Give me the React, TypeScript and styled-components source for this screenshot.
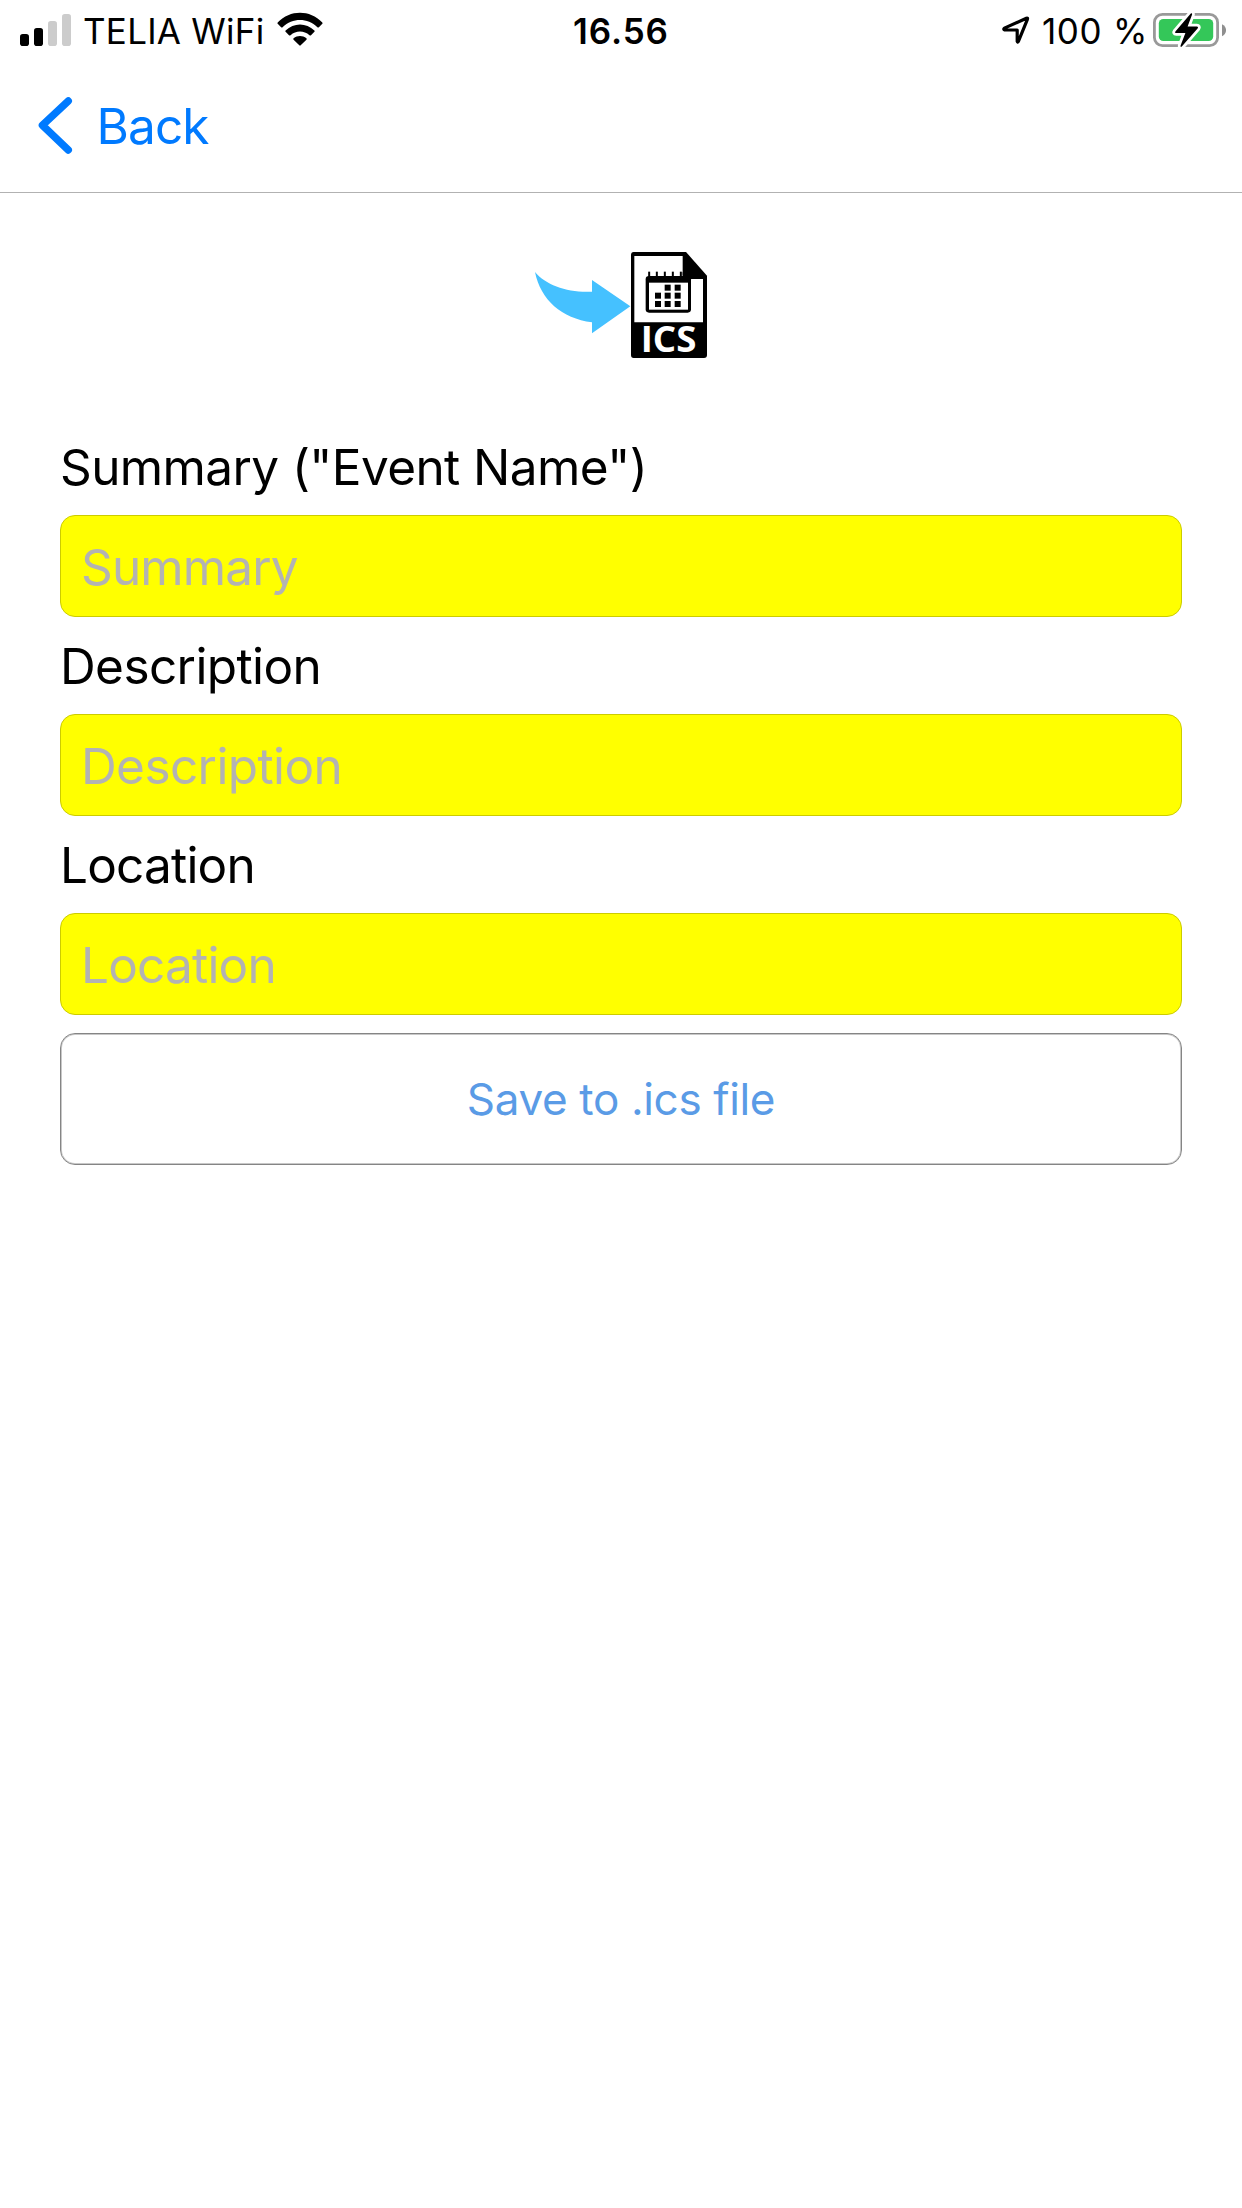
import React from "react";
import styled, { createGlobalStyle } from "styled-components";

const GlobalStyle = createGlobalStyle`
  * { box-sizing: border-box; }
  body { margin: 0; background: #fff; font-family: Inter, "Liberation Sans", sans-serif; color: #000; }
`;

const Screen = styled.div`
  width: 1242px;
  height: 2208px;
  overflow: hidden;
  background: #fff;
  display: flex;
  flex-direction: column;
`;

const StatusBar = styled.header`
  height: 60px;
  flex: none;
  padding: 0 16px;
  display: grid;
  grid-template-columns: 1fr auto 1fr;
  align-items: start;
  line-height: 62px;
  font-size: 35px;

  svg { display: block; flex: none; }
`;

const StatusGroup = styled.div<{ $end?: boolean }>`
  display: flex;
  justify-content: ${(p) => (p.$end ? "flex-end" : "flex-start")};
  padding-left: ${(p) => (p.$end ? 0 : 4)}px;
`;

const Carrier = styled.span`
  width: 182px;
  margin: 0 12px 0 12px;
  white-space: nowrap;
  letter-spacing: 0.25px;
`;

const Clock = styled.span`
  font-weight: 600;
  letter-spacing: 0.9px;
`;

const Charge = styled.span`
  margin: 0 5px 0 12px;
  white-space: nowrap;
  letter-spacing: 0.7px;
`;

const NavBar = styled.nav`
  height: 133px;
  flex: none;
  border-bottom: 1px solid #b2b2b2;
  padding: 36px 0 0 37px;
`;

const BackLink = styled.a`
  display: flex;
  align-items: center;
  gap: 23.5px;
  height: 60px;
  width: max-content;
  color: #007aff;
  font-size: 49.5px;
  line-height: 60px;
  letter-spacing: -0.9px;
`;

const Content = styled.main`
  display: flex;
  flex-direction: column;
  padding: 58px 60px 0;
`;

const Logo = styled.svg`
  display: block;
  align-self: center;
  overflow: visible;
  margin-bottom: 77px;
`;

const Form = styled.form`
  display: flex;
  flex-direction: column;
  gap: 18px;
`;

const Label = styled.label<{ $tracking: number }>`
  height: 61px;
  line-height: 63px;
  font-size: 49.5px;
  letter-spacing: ${(p) => p.$tracking}px;
`;

const Field = styled.input<{ $tracking: number }>`
  height: 102px;
  width: 100%;
  border: 1px solid #cccc00;
  border-radius: 15px;
  background: #ff0;
  padding: 1px 20px 0;
  outline: none;
  font: 400 49.5px Inter, "Liberation Sans", sans-serif;
  letter-spacing: ${(p) => p.$tracking}px;

  &::placeholder { color: #b3b3b3; opacity: 1; }
`;

const SaveButton = styled.button`
  height: 132px;
  border: 1px solid #858585;
  box-shadow: inset 0 0 0 1px #c8c8c8;
  border-radius: 15px;
  background: #fff;
  color: #5a9be6;
  padding: 0;
  font: 400 44px Inter, "Liberation Sans", sans-serif;
  letter-spacing: -0.35px;
`;

const fields = [
  { id: "summary", label: 'Summary ("Event Name")', placeholder: "Summary", labelTracking: -0.6, tracking: -0.85 },
  { id: "description", label: "Description", placeholder: "Description", labelTracking: -0.6, tracking: -0.6 },
  { id: "location", label: "Location", placeholder: "Location", labelTracking: -0.8, tracking: -0.8 },
];

const SignalIcon = () => (
  <svg width="51" height="60" viewBox="0 0 51 60">
    <rect x="0" y="34" width="9" height="12" rx="2.8" />
    <rect x="14" y="28" width="9" height="18" rx="2.8" />
    <rect x="28" y="21" width="9" height="25" rx="2.8" fill="#ccc" />
    <rect x="42" y="14" width="9" height="32" rx="2.8" fill="#ccc" />
  </svg>
);

const WifiIcon = () => (
  <svg width="46" height="60" viewBox="0 0 46 60">
    <path d="M.7 22.4C13.2 9.5 32.8 9.5 45.3 22.4q.7.7 0 1.4l-3.4 3.4q-.8.7-1.5 0c-9.8-9.6-25-9.6-34.8 0q-.7.7-1.5 0L.7 23.8q-.7-.7 0-1.4z" />
    <path d="M8.6 30.4c8.2-8 20.6-8 28.8 0q.7.7 0 1.4L34 35.2q-.7.7-1.5 0c-5.5-5-13.5-5-19 0q-.8.7-1.5 0l-3.4-3.4q-.7-.7 0-1.4z" />
    <path d="M16.6 38.3c3.7-3.1 9.1-3.1 12.8 0q.8.7 0 1.5l-5.7 5.5q-.7.7-1.4 0l-5.7-5.5q-.8-.8 0-1.5z" />
  </svg>
);

const LocationIcon = () => (
  <svg width="28" height="60" viewBox="0 0 28 60">
    <path
      d="M2.4 28.1 24.4 18.3q1.6-.6 1 1L16.3 41.6q-.7 1.3-1.1-.2V30H2.8q-1.8-.7-.4-1.9z"
      fill="none"
      stroke="#000"
      strokeWidth="3.2"
      strokeLinejoin="round"
    />
  </svg>
);

const BatteryIcon = () => (
  <svg width="73" height="60" viewBox="0 0 73 60">
    <rect x="1.4" y="14.4" width="63.2" height="31.2" rx="8" fill="none" stroke="#999" strokeWidth="2.8" />
    <path d="M69 24.2c5.4 2.7 5.4 9.3 0 12z" fill="#8f8f8f" />
    <rect x="5.8" y="19" width="54.4" height="22" rx="4.5" fill="#34c759" />
    <path
      d="M37.8 13.5 22.6 31.2q-1.3 1.8.8 1.9h9l-4.8 12.5q-.4 2 1.2 1l15.8-18.2q1.2-1.7-.9-1.8h-9.1l4.5-12.2q.2-1.8-1.3-.9z"
      stroke="#fff"
      strokeWidth="5.5"
      strokeLinejoin="round"
    />
    <path d="M37.8 13.5 22.6 31.2q-1.3 1.8.8 1.9h9l-4.8 12.5q-.4 2 1.2 1l15.8-18.2q1.2-1.7-.9-1.8h-9.1l4.5-12.2q.2-1.8-1.3-.9z" />
  </svg>
);

const BackChevron = () => (
  <svg width="36" height="60" viewBox="0 0 36 60">
    <path d="M31.3 5 5.4 29.3 31.3 54" fill="none" stroke="#007aff" strokeWidth="7.4" strokeLinecap="round" strokeLinejoin="round" />
  </svg>
);

const IcsLogo = () => (
  <Logo width="172" height="108" viewBox="45 48 516 324">
    <path d="M45 111C78 151 145 174 216 170V135L331 214 216 295V262C125 250 62 195 45 111z" fill="#45c1ff" />
    <path d="M341 51H498L561 122V360q0 9-9 9H341q-8 0-8-9V60q0-9 8-9z" />
    <path d="M343 63H488V120q0 12 12 12h49V262H343z" fill="#fff" />
    <g>
      {[387, 410, 434, 458, 482].map((x) => (
        <rect key={x} x={x - 2.5} y="110" width="6" height="16" />
      ))}
      <rect x="377" y="123" width="136" height="110" rx="10" />
      <path d="M488 111V120q0 12 12 12h12V123h-12z" />
    </g>
    <rect x="387" y="143" width="117" height="81" fill="#fff" />
    {[
      [434, 149], [464, 149],
      [405, 173], [434, 173], [464, 173],
      [405, 198], [434, 198], [464, 198],
    ].map(([x, y]) => (
      <rect key={`${x}-${y}`} x={x} y={y} width="18" height="18" />
    ))}
    <text x="362" y="350" fill="#fff" fontFamily="Open Sans, Noto Sans, sans-serif" fontWeight="700" fontSize="106" textLength="167" lengthAdjust="spacingAndGlyphs">
      ICS
    </text>
  </Logo>
);

export default function App() {
  return (
    <Screen>
      <GlobalStyle />
      <StatusBar>
        <StatusGroup>
          <SignalIcon />
          <Carrier>TELIA WiFi</Carrier>
          <WifiIcon />
        </StatusGroup>
        <Clock>16.56</Clock>
        <StatusGroup $end>
          <LocationIcon />
          <Charge>100 %</Charge>
          <BatteryIcon />
        </StatusGroup>
      </StatusBar>
      <NavBar>
        <BackLink>
          <BackChevron />
          Back
        </BackLink>
      </NavBar>
      <Content>
        <IcsLogo />
        <Form>
          {fields.map((f) => (
            <React.Fragment key={f.id}>
              <Label htmlFor={f.id} $tracking={f.labelTracking}>{f.label}</Label>
              <Field id={f.id} placeholder={f.placeholder} $tracking={f.tracking} />
            </React.Fragment>
          ))}
          <SaveButton type="button">Save to .ics file</SaveButton>
        </Form>
      </Content>
    </Screen>
  );
}
